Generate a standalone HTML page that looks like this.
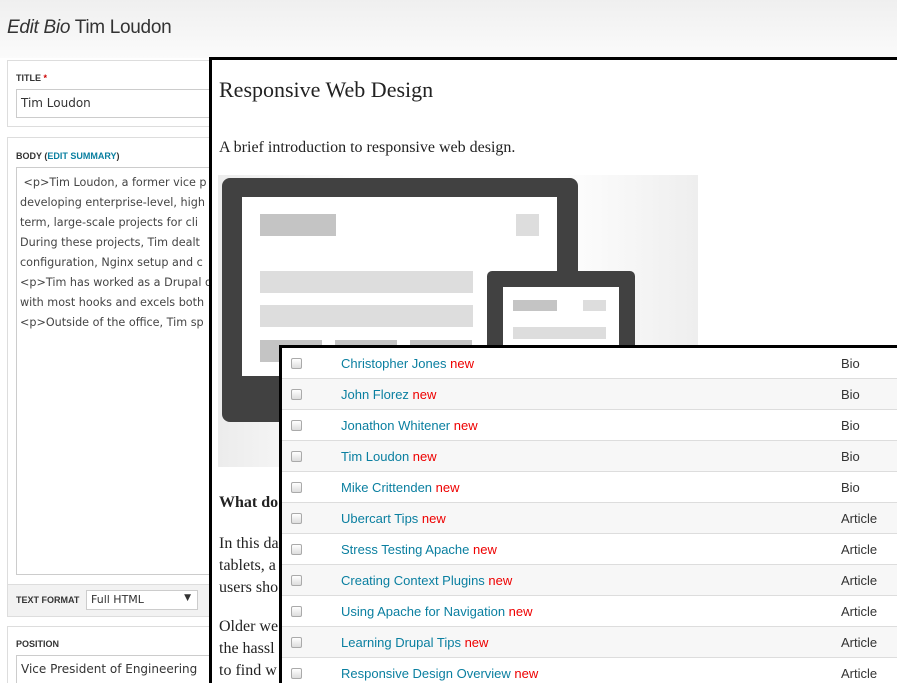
<!DOCTYPE html>
<html style="width:897px;height:683px;overflow:hidden"><head><style>
*{margin:0;padding:0;box-sizing:border-box}
body{width:897px;height:683px;overflow:hidden;position:relative;background:#fff;font-family:"DejaVu Sans","Liberation Sans",sans-serif;color:#333}
.hdr{position:absolute;left:0;top:0;width:897px;height:58px;background:linear-gradient(#efefef,#fbfbfb)}
.hdr h1{position:absolute;left:7px;top:17px;font-family:"Liberation Sans",sans-serif;font-weight:normal;font-size:19px;color:#333;letter-spacing:-0.3px}
.fs{position:absolute;left:7px;border:1px solid #ddd;background:#fff;width:300px}
.lbl{position:absolute;font-family:"Liberation Sans",sans-serif;font-size:9px;font-weight:bold;color:#333;text-transform:uppercase}
.inp{position:absolute;border:1px solid #ccc;font-size:12px;padding:6px 4px;color:#333;white-space:nowrap;overflow:hidden}
.ta{position:absolute;left:16px;top:167px;width:300px;height:408px;border:1px solid #ccc;font-size:11.2px;line-height:20px;padding:5px 3px;white-space:nowrap;overflow:hidden;color:#444}
.p1{position:absolute;left:209px;top:57px;width:700px;height:640px;border:3px solid #000;background:#fff;font-family:"Liberation Serif",serif;color:#222}
.p1 h2{position:absolute;left:7px;top:17px;font-weight:normal;font-size:22px}
.p1 .t{position:absolute;left:7px;font-size:16px;white-space:nowrap;line-height:22px}
.p2{position:absolute;left:279px;top:345px;width:700px;height:360px;border-top:3px solid #000;border-left:3px solid #000;background:#fff;font-family:"Liberation Sans",sans-serif;font-size:13px}
.row{height:31px;border-bottom:1px solid #ddd;position:relative}
.row:nth-child(even){background:#f7f7f7}
.cb{position:absolute;left:9px;top:10px;width:11px;height:11px;border:1px solid #aaa;border-radius:2px;background:linear-gradient(#fff,#ddd)}
.nm{position:absolute;left:59px;top:8px;color:#0a7fa0}
.nm b{font-weight:normal;color:#e00}
.ty{position:absolute;left:559px;top:8px;color:#333}
</style></head><body>
<div class="hdr"><h1><i>Edit Bio</i> Tim Loudon</h1></div>
<div class="fs" style="top:60px;height:67px"></div>
<div class="lbl" style="left:16px;top:73px">Title <span style="color:#c00">*</span></div>
<div class="inp" style="left:16px;top:89px;width:300px;height:29px">Tim Loudon</div>
<div class="fs" style="top:137px;height:480px"></div>
<div class="lbl" style="left:16px;top:151px">Body (<span style="color:#0a7fa0">Edit Summary</span>)</div>
<div class="ta">&nbsp;&lt;p&gt;Tim Loudon, a former vice p<br>developing enterprise-level, high<br>term, large-scale projects for cli<br>During these projects, Tim dealt<br>configuration, Nginx setup and c<br>&lt;p&gt;Tim has worked as a Drupal d<br>with most hooks and excels both<br>&lt;p&gt;Outside of the office, Tim sp</div>
<div style="position:absolute;left:8px;top:584px;width:300px;height:32px;background:#f2f2f2;border-top:1px solid #ddd"></div>
<div class="lbl" style="left:16px;top:595px">Text format</div>
<div class="inp" style="left:86px;top:590px;width:112px;height:20px;padding:2px 4px;font-size:11px;background:#fff">Full HTML<span style="position:absolute;right:6px;top:2px;font-size:9px">▼</span></div>
<div class="fs" style="top:626px;height:70px"></div>
<div class="lbl" style="left:16px;top:639px">Position</div>
<div class="inp" style="left:16px;top:655px;width:300px;height:29px">Vice President of Engineering</div>

<div class="p1">
<h2>Responsive Web Design</h2>
<div class="t" style="top:77px">A brief introduction to responsive web design.</div>
<div style="position:absolute;left:6px;top:115px;width:480px;height:292px;background:linear-gradient(90deg,#ececec,#fff 30%,#fff 70%,#eee)">
 <div style="position:absolute;left:4px;top:3px;width:356px;height:244px;background:#414141;border-radius:8px"></div>
 <div style="position:absolute;left:24px;top:22px;width:315px;height:179px;background:#fff"></div>
 <div style="position:absolute;left:42px;top:39px;width:76px;height:22px;background:#c4c4c4"></div>
 <div style="position:absolute;left:298px;top:39px;width:23px;height:22px;background:#ddd"></div>
 <div style="position:absolute;left:42px;top:96px;width:213px;height:22px;background:#ddd"></div>
 <div style="position:absolute;left:42px;top:130px;width:213px;height:22px;background:#ddd"></div>
 <div style="position:absolute;left:42px;top:165px;width:62px;height:22px;background:#c4c4c4"></div>
 <div style="position:absolute;left:117px;top:165px;width:62px;height:22px;background:#c4c4c4"></div>
 <div style="position:absolute;left:192px;top:165px;width:62px;height:22px;background:#c4c4c4"></div>
 <div style="position:absolute;left:269px;top:96px;width:148px;height:120px;background:#414141;border-radius:5px"></div>
 <div style="position:absolute;left:285px;top:112px;width:116px;height:100px;background:#fff"></div>
 <div style="position:absolute;left:295px;top:125px;width:44px;height:11px;background:#c4c4c4"></div>
 <div style="position:absolute;left:365px;top:125px;width:23px;height:11px;background:#ddd"></div>
 <div style="position:absolute;left:295px;top:152px;width:93px;height:12px;background:#ddd"></div>
</div>
<div class="t" style="top:432px;font-weight:bold">What do</div>
<div class="t" style="top:473px">In this da<br>tablets, a<br>users sho</div>
<div class="t" style="top:556px">Older we<br>the hassl<br>to find w</div>
</div>

<div class="p2">
<div class="row"><span class="cb"></span><span class="nm">Christopher Jones <b>new</b></span><span class="ty">Bio</span></div>
<div class="row"><span class="cb"></span><span class="nm">John Florez <b>new</b></span><span class="ty">Bio</span></div>
<div class="row"><span class="cb"></span><span class="nm">Jonathon Whitener <b>new</b></span><span class="ty">Bio</span></div>
<div class="row"><span class="cb"></span><span class="nm">Tim Loudon <b>new</b></span><span class="ty">Bio</span></div>
<div class="row"><span class="cb"></span><span class="nm">Mike Crittenden <b>new</b></span><span class="ty">Bio</span></div>
<div class="row"><span class="cb"></span><span class="nm">Ubercart Tips <b>new</b></span><span class="ty">Article</span></div>
<div class="row"><span class="cb"></span><span class="nm">Stress Testing Apache <b>new</b></span><span class="ty">Article</span></div>
<div class="row"><span class="cb"></span><span class="nm">Creating Context Plugins <b>new</b></span><span class="ty">Article</span></div>
<div class="row"><span class="cb"></span><span class="nm">Using Apache for Navigation <b>new</b></span><span class="ty">Article</span></div>
<div class="row"><span class="cb"></span><span class="nm">Learning Drupal Tips <b>new</b></span><span class="ty">Article</span></div>
<div class="row"><span class="cb"></span><span class="nm">Responsive Design Overview <b>new</b></span><span class="ty">Article</span></div>
</div>
</body></html>
